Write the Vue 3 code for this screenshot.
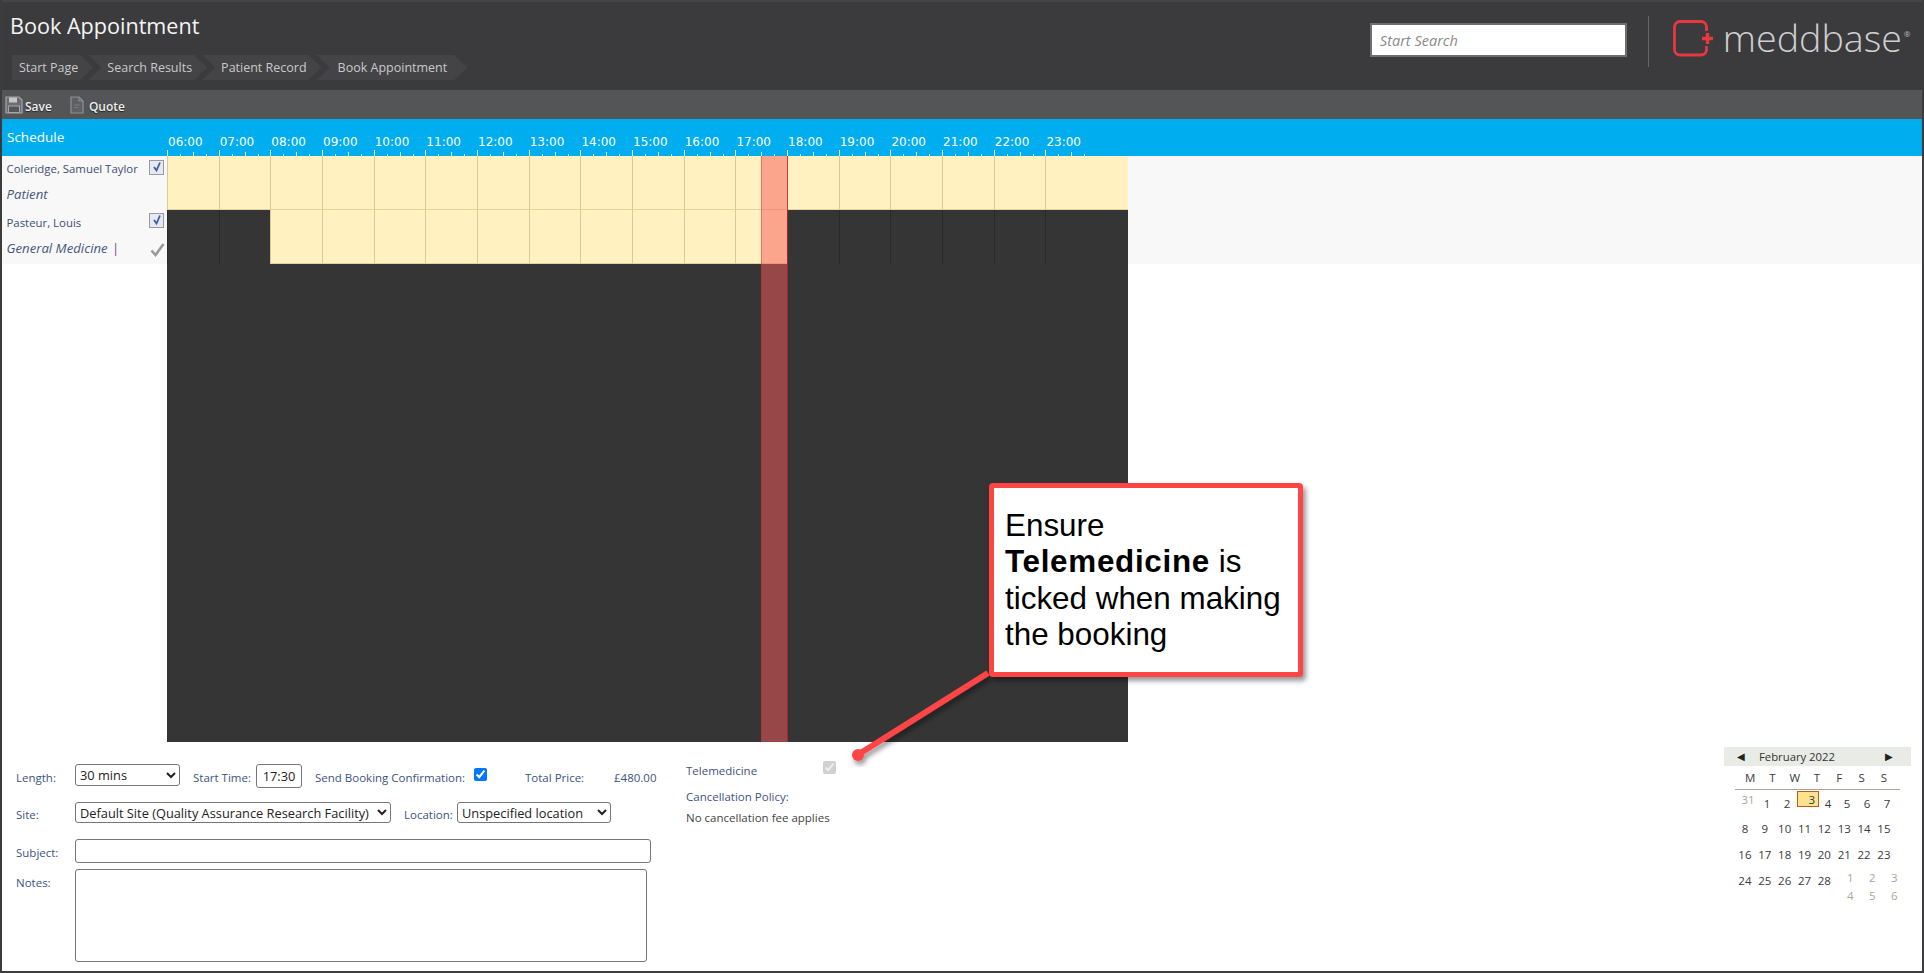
<script setup>
const hours = Array.from({ length: 18 }, (_, i) => String(i + 6).padStart(2, '0') + ':00')
const crumbs = ['Start Page', 'Search Results', 'Patient Record', 'Book Appointment']
const dow = ['M', 'T', 'W', 'T', 'F', 'S', 'S']
const w1 = [
  { d: 31, cls: 'c31 mute' }, { d: 1, cls: 'c1' }, { d: 2, cls: 'c2' }, { d: 3, cls: 'today' },
  { d: 4, cls: 'c4' }, { d: 5, cls: 'c5' }, { d: 6, cls: 'c5' }, { d: 7, cls: 'c5' }
]
const rows = [[8, 9, 10, 11, 12, 13, 14, 15], [16, 17, 18, 19, 20, 21, 22, 23]]
</script>

<template>
  <div class="app">
    <header class="top">
      <div class="top-left">
        <h1>Book Appointment</h1>
        <nav class="crumbs">
          <span v-for="c in crumbs" :key="c" class="crumb">{{ c }}</span>
        </nav>
      </div>
      <div class="top-right">
        <input class="search" placeholder="Start Search" />
        <div class="divider"></div>
        <svg class="logo-mark" viewBox="0 0 41 37" width="41" height="37" fill="none" stroke="#e8383f">
          <path d="M33.5 11 V7 a5.5 5.5 0 0 0 -5.5 -5.5 H7 a5.5 5.5 0 0 0 -5.5 5.5 V29.500 a5.500 5.500 0 0 0 5.500 5.500 H28 a5.500 5.500 0 0 0 5.500 -5.500 V26" stroke-width="2.800" />
          <path d="M29 18.500 H40 M34.500 13 V24" stroke-width="3.400" />
        </svg>
        <span class="logo-text">meddbase</span><span class="reg">®</span>
      </div>
    </header>

    <div class="toolbar">
      <svg width="18" height="18" viewBox="0 0 18 18" class="ic-save">
        <path d="M1 1 H14 L17 4 V17 H1 Z" fill="#6c6d70" stroke="#a5a6a8" stroke-width="1.200" />
        <rect x="4" y="1.500" width="8" height="5" fill="#c5c5c7" />
        <rect x="3.500" y="10" width="11" height="6.500" fill="#545557" stroke="#a5a6a8" />
      </svg>
      <span class="tool-label">Save</span>
      <svg width="14" height="18" viewBox="0 0 14 18" class="ic-doc">
        <path d="M1 1 H9 L13 5 V17 H1 Z" fill="#5f6062" stroke="#8f9092" stroke-width="1.200" />
        <path d="M9 1 V5 H13" fill="none" stroke="#8f9092" />
        <path d="M4 9 H10 M4 11.500 H8" stroke="#77787a" />
      </svg>
      <span class="tool-label">Quote</span>
    </div>

    <div class="blue">
      <div class="blue-title">Schedule</div>
      <div class="ruler">
        <div v-for="h in hours" :key="h" class="tick-cell"><span>{{ h }}</span></div>
      </div>
    </div>

    <div class="schedule">
      <div class="row">
        <div class="who">
          <div class="who-line first"><span class="name">Coleridge, Samuel Taylor</span><span class="cb"><svg width="12" height="12" viewBox="0 0 12 12"><path d="M3 6 L5.500 9.500 L9 1.500" fill="none" stroke="#3f5aa5" stroke-width="1.800" /></svg></span></div>
          <div class="who-line"><span class="role">Patient</span></div>
        </div>
        <div class="slots">
          <div v-for="h in hours" :key="h" class="cell cream"></div>
          <div class="cell cream fill"></div>
        </div>
      </div>
      <div class="row">
        <div class="who">
          <div class="who-line first"><span class="name">Pasteur, Louis</span><span class="cb up"><svg width="12" height="12" viewBox="0 0 12 12"><path d="M3 6 L5.500 9.500 L9 1.500" fill="none" stroke="#3f5aa5" stroke-width="1.800" /></svg></span></div>
          <div class="who-line"><span class="role">General Medicine <i class="bar">|</i></span>
            <svg class="grey-tick" width="15" height="15" viewBox="0 0 15 15"><path d="M1.500 8.500 L5.500 13 L13.500 2" fill="none" stroke="#9a9a9a" stroke-width="2.600" /></svg>
          </div>
        </div>
        <div class="slots">
          <div v-for="(h, i) in hours" :key="h" class="cell" :class="i < 2 || i > 11 ? 'dark' : 'cream'"></div>
          <div class="cell dark fill"></div>
        </div>
      </div>
      <div class="canvas">
        <div class="canvas-dark"></div>
      </div>
      <div class="selection"></div>
    </div>

    <section class="bottom">
      <div class="form">
        <div class="f-row r1">
          <label class="lab l-first">Length:</label>
          <select class="s-len"><option>30 mins</option></select>
          <label class="lab l-start">Start Time:</label>
          <input class="t-time" value="17:30" />
          <label class="lab l-send">Send Booking Confirmation:</label>
          <input class="chk" type="checkbox" checked />
          <label class="lab l-price">Total Price:</label>
          <span class="lab l-val">£480.00</span>
        </div>
        <div class="f-row r2">
          <label class="lab l-first">Site:</label>
          <select class="s-site"><option>Default Site (Quality Assurance Research Facility)</option></select>
          <label class="lab l-loc">Location:</label>
          <select class="s-loc"><option>Unspecified location</option></select>
        </div>
        <div class="f-row r3">
          <label class="lab l-first">Subject:</label>
          <input class="subject" />
        </div>
        <div class="f-row r4">
          <label class="lab l-first">Notes:</label>
          <textarea class="notes"></textarea>
        </div>
      </div>

      <div class="mid">
        <div class="tele"><span class="lab">Telemedicine</span><input class="chk-dis" type="checkbox" checked disabled /></div>
        <div class="lab policy">Cancellation Policy:</div>
        <div class="nofee">No cancellation fee applies</div>
      </div>

      <div class="cal">
        <div class="cal-head"><span class="arr">◀</span><span class="month">February 2022</span><span class="arr right">▶</span></div>
        <div class="cal-dow"><span v-for="(d, i) in dow" :key="i">{{ d }}</span></div>
        <div class="cal-w1"><span v-for="c in w1" :key="c.d" :class="c.cls">{{ c.d }}</span></div>
        <div v-for="(r, i) in rows" :key="i" class="cal-week" :class="'wk' + i"><span v-for="d in r" :key="d">{{ d }}</span></div>
        <div class="cal-last">
          <span v-for="d in [24, 25, 26, 27, 28]" :key="d" class="ld">{{ d }}</span>
          <div class="extra"><span v-for="d in [1, 2, 3, 4, 5, 6]" :key="d">{{ d }}</span></div>
        </div>
      </div>
    </section>

    <svg class="leader" width="150" height="100" viewBox="0 0 150 100">
      <defs><filter id="sh" x="-20%" y="-20%" width="140%" height="140%"><feDropShadow dx="2" dy="4" stdDeviation="2.500" flood-color="#000" flood-opacity="0.400" /></filter></defs>
      <g filter="url(#sh)">
        <path d="M143 6 L14 87" stroke="#ff4444" stroke-width="6" />
        <circle cx="13" cy="88" r="6" fill="#ff4444" />
      </g>
    </svg>
    <div class="callout">
      <div>Ensure</div>
      <div><b>Telemedicine</b> is</div>
      <div>ticked when making</div>
      <div>the booking</div>
    </div>
  </div>
</template>

<style>
html, body { margin: 0; padding: 0; background: #fff; overflow: hidden; }
</style>

<style scoped>
.app {
  position: relative;
  width: 1924px;
  height: 973px;
  box-sizing: border-box;
  border: 2px solid #3c3c3e;
  border-top-width: 0;
  font-family: "Open Sans", "Liberation Sans", sans-serif;
  display: flex;
  flex-direction: column;
  overflow: hidden;
  background: #fff;
}
.top {
  height: 90px;
  flex: none;
  background: #3b3b3d;
  border-top: 2px solid #454547;
  box-sizing: border-box;
  display: flex;
  justify-content: space-between;
}
.top-left { padding-left: 8px; }
h1 {
  margin: 8px 0 0;
  font-size: 21.600px;
  line-height: 32px;
  font-weight: 400;
  color: #f4f4f4;
}
.crumbs { display: flex; margin-top: 13px; margin-left: 2px; gap: 1px; }
.crumb {
  height: 25px;
  line-height: 25px;
  font-size: 12.500px;
  color: #c9c9c9;
  background: #444446;
  padding: 0 15px 0 7px;
  margin-right: -6px;
  clip-path: polygon(0 0, calc(100% - 13px) 0, 100% 50%, calc(100% - 13px) 100%, 0 100%, 0 0);
}
.crumb + .crumb {
  padding-left: 19px;
  clip-path: polygon(0 0, calc(100% - 13px) 0, 100% 50%, calc(100% - 13px) 100%, 0 100%, 13px 50%);
}
.crumb:last-child { padding-left: 21px; padding-right: 20px; }
.top-right { display: flex; align-items: flex-start; }
.search {
  width: 257px;
  height: 34px;
  box-sizing: border-box;
  margin-top: 21px;
  border: 2px solid #6e6e70;
  background: #fff;
  padding: 0 8px;
  outline: none;
  font: italic 14.500px "Open Sans", sans-serif;
}
.search::placeholder { color: #8a8a8a; opacity: 1; }
.divider { width: 1px; height: 51px; background: #666668; margin: 14px 24px 0 21px; }
.logo-mark { margin-top: 18px; }
.logo-text {
  font-weight: 300;
  font-size: 37.600px;
  line-height: 44px;
  margin: 14px 0 0 9px;
  color: #cfcfcf;
  letter-spacing: 0;
}
.reg { font-size: 8px; color: #bbb; margin: 26px 11.500px 0 2px; }

.toolbar {
  height: 29px;
  flex: none;
  background: #545557;
  display: flex;
  align-items: center;
}
.ic-save { margin-left: 3px; }
.tool-label { font-size: 12px; font-weight: 600; color: #eee; margin-left: 2px; text-shadow: 0 1px 1px #222; position: relative; top: 2px; }
.ic-doc { margin-left: 18px; }
.tool-label:last-child { margin-left: 5px; }

.blue { height: 37px; flex: none; background: #00aeef; display: flex; }
.blue-title { width: 165px; flex: none; padding: 8px 0 0 5px; box-sizing: border-box; color: #fff; font-size: 13.500px; font-weight: 500; line-height: 20px; }
.ruler { display: flex; align-items: flex-end; }
.tick-cell {
  width: 51.680px;
  height: 37px;
  box-sizing: border-box;
  position: relative;
  color: #fff;
  font: 12px "DejaVu Sans", sans-serif;
  background-image:
    linear-gradient(#fff, #fff), linear-gradient(#fff, #fff), linear-gradient(#fff, #fff), linear-gradient(#fff, #fff);
  background-repeat: no-repeat;
  background-size: 1px 6px, 1px 2px, 1px 4px, 1px 2px;
  background-position: 0 31px, 13px 35px, 26px 33px, 39px 35px;
}
.tick-cell span { position: absolute; left: 1px; top: 15px; line-height: 16px; }

.schedule { position: relative; flex: none; height: 586px; display: flex; flex-direction: column; }
.row { display: flex; height: 54px; flex: none; background: #f8f8f8; }
.who { width: 165px; flex: none; box-sizing: border-box; padding-left: 4.500px; }
.who-line { height: 27px; display: flex; align-items: center; justify-content: space-between; padding-right: 2px; }
.who-line.first { height: 24px; }
.name { font-size: 11.400px; color: #3d4f74; }
.role { font-size: 13.200px; font-style: italic; color: #46587c; }
.bar { color: #7a3f9a; font-style: normal; margin-left: 1px; }
.cb {
  width: 15px; height: 15px; box-sizing: border-box; border: 1px solid #9a9a9a; background: #e6e9f2;
  display: flex; align-items: center; justify-content: center;
  position: relative; top: -1px; left: -1px;
}
.cb.up { top: -2px; }
.grey-tick { position: relative; top: 2px; }
.slots { width: 961px; display: flex; flex: none; }
.cell { width: 51.680px; flex: none; box-sizing: border-box; border-left: 1px solid; }
.cell.fill { flex: 1; width: auto; border-left: 0; }
.cream { background: #fff1c0; border-color: #dcca93; border-bottom: 1px solid #e3d29a; }
.dark { background: #353535; border-color: #2a2a2a; }
.canvas { flex: 1; display: flex; }
.canvas-dark { width: 961px; margin-left: 165px; background: #353535; }
.selection {
  position: absolute;
  left: 759px;
  top: 0;
  width: 27px;
  height: 586px;
  box-sizing: border-box;
  background: rgba(250, 90, 90, 0.5);
  border-left: 1px solid rgba(190, 40, 40, 0.4);
  border-right: 1px solid rgba(170, 30, 30, 0.7);
}

.bottom { flex: 1; display: flex; min-height: 0; }
.form { width: 660px; flex: none; padding: 22px 0 0 14px; box-sizing: border-box; }
.f-row { display: flex; align-items: flex-start; }
.lab { font-size: 11.500px; line-height: 14px; color: #3d5480; white-space: nowrap; }
.l-first { width: 59px; flex: none; margin-top: 7px; }
.r2 { margin-top: 14px; }
.r2 .lab { margin-top: 6px; }
.r3 { margin-top: 16px; }
.r4 { margin-top: 6px; }
.r4 .lab { margin-top: 7px; }
select, .t-time, .subject, .notes {
  box-sizing: border-box;
  font-family: "Open Sans", sans-serif;
  font-size: 12.800px;
  color: #222;
  background: #fff;
  border: 1px solid #767676;
  border-radius: 3px;
  margin: 0;
}
.s-len { width: 104.500px; height: 22px; }
.l-start { margin: 7px 0 0 13.500px; width: 63px; }
.t-time { width: 46px; height: 24px; padding: 0 2px; text-align: center; outline: none; }
.l-send { margin: 7px 0 0 13px; width: 159px; }
.chk { width: 13px; height: 13px; margin: 4px 0 0; accent-color: #0075ff; }
.l-price { margin: 7px 0 0 38px; width: 89px; }
.l-val { margin-top: 7px; }
.s-site { width: 316px; height: 21px; }
.l-loc { margin-left: 13px; width: 53px; }
.s-loc { width: 153.500px; height: 21px; }
.subject { width: 575.500px; height: 24px; outline: none; }
.notes { width: 572px; height: 93px; resize: none; outline: none; display: block; }

.mid { width: 200px; flex: none; margin-left: 24px; padding-top: 19px; }
.tele { display: flex; height: 20px; align-items: flex-start; }
.tele .lab { width: 137px; margin-top: 3px; }
.chk-dis { width: 13px; height: 13px; margin: 0; }
.policy { margin-top: 9px; }
.nofee { font-size: 11.500px; line-height: 14px; color: #444; margin-top: 7px; white-space: nowrap; }

.cal { width: 187px; flex: none; margin-left: auto; margin-right: 11px; padding-top: 5px; font-size: 11.500px; color: #3a3a3a; }
.cal-head { height: 19px; background: #e9ece6; display: flex; align-items: center; line-height: 19px; padding-left: 13px; position: relative; }
.arr { font: 10px "DejaVu Sans", sans-serif; width: 22px; color: #222; }
.month { color: #333; font-size: 11.300px; }
.arr.right { margin-left: 50px; }
.cal-dow { display: flex; margin: 3px 11px 0; height: 20px; line-height: 18px; border-bottom: 1px solid #a8a69a; justify-content: flex-start; padding-left: 4px; }
.cal-dow span { width: 22.300px; text-align: center; flex: none; }
.cal-w1 { display: flex; height: 22px; margin-left: 11px; align-items: flex-end; line-height: 16px; }
.cal-w1 span { text-align: center; flex: none; }
.c31 { width: 26px; align-self: flex-start; padding-top: 2px; }
.mute { color: #aaa79b; }
.c1 { width: 12px; }
.c2 { width: 20px; margin-left: 4px; }
.today {
  width: 22px; height: 16px; box-sizing: border-box; align-self: flex-start; margin-top: 1px;
  background: #fde290; border: 1px solid #c55a11; text-align: right !important; padding-right: 3px; line-height: 15px;
}
.c4 { width: 18px; }
.c5 { width: 20px; }
.cal-week { display: flex; margin-left: 11px; line-height: 16px; }
.cal-week span, .ld { width: 19.860px; text-align: center; flex: none; }
.wk0 { margin-top: 9px; }
.wk1 { margin-top: 10px; }
.cal-last { display: flex; margin: 10px 0 0 11px; line-height: 16px; }
.extra { display: grid; grid-template-columns: repeat(3, 22px); margin: -3px 0 0 5px; color: #aaa79b; grid-auto-rows: 18px; text-align: center; }

.callout {
  position: absolute;
  left: 987px;
  top: 483px;
  width: 314px;
  height: 194px;
  box-sizing: border-box;
  background: #fff;
  border: 5px solid #ff4444;
  border-radius: 4px;
  box-shadow: 3px 4px 5px rgba(0, 0, 0, 0.4);
  padding: 20px 10px 0 11px;
  font: 31.400px/36.400px "Liberation Sans", Arial, sans-serif;
  color: #000;
  white-space: nowrap;
}
.callout b { letter-spacing: 0.7px; }
.leader { position: absolute; left: 843px; top: 667px; }
</style>
